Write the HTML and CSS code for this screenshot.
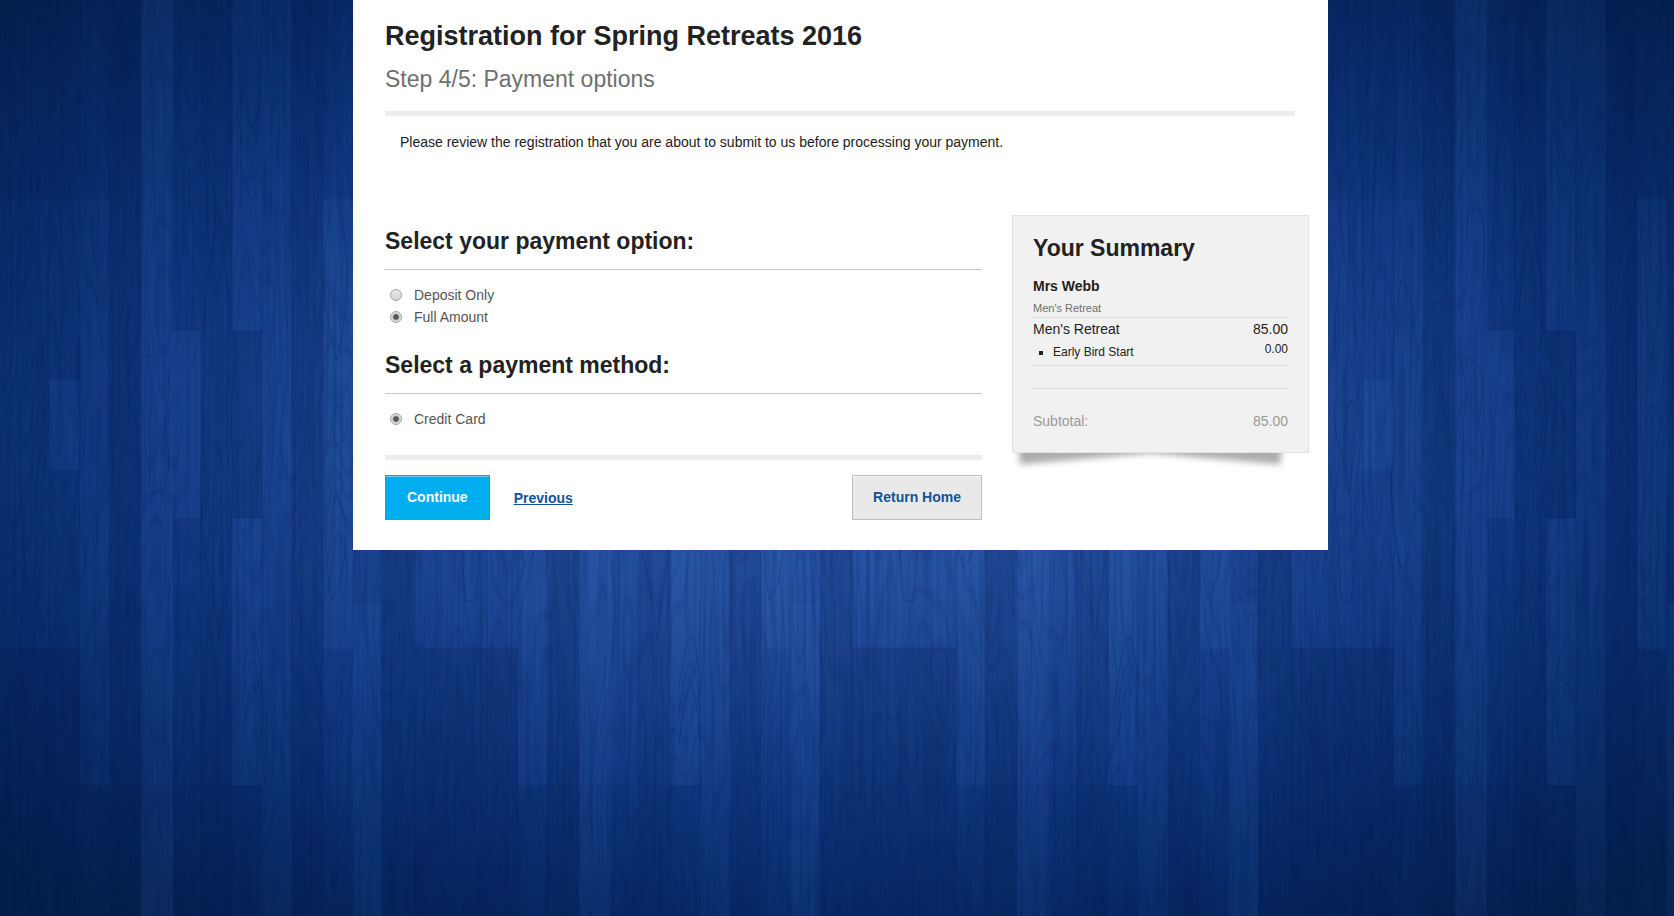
FILE: index.html
```html
<!doctype html>
<html lang="en">
    <head>
        <meta charset="UTF-8" />
        <meta name="viewport" content="width=device-width, initial-scale=1.0" />
        <title>Registration for Spring Retreats 2016</title>
        <link rel="stylesheet" href="styles.css">
    </head>
    <body>
        <!-- Wooden floor backdrop: planks repeat every 438px, grain is drawn over them -->
        <svg class="backdrop" aria-hidden="true">
            <defs>
                <filter id="grain" x="0" y="0" width="100%" height="100%" color-interpolation-filters="sRGB">
                    <feTurbulence type="fractalNoise" baseFrequency="0.3 0.006" numOctaves="3" seed="4" />
                    <feColorMatrix values="0 0 0 0 0  0 0 0 0 0.06  0 0 0 0 0.25  2.4 0 0 0 -0.9" />
                </filter>
                <filter id="rings" x="0" y="0" width="100%" height="100%" color-interpolation-filters="sRGB">
                    <feTurbulence type="fractalNoise" baseFrequency="0.026 0.004" numOctaves="2" seed="11" />
                    <feColorMatrix values="0 0 0 0 0  0 0 0 0 0.08  0 0 0 0 0.3  1 0 0 0 0" />
                    <feComponentTransfer>
                        <feFuncA type="table" tableValues="0 0 0 0 0 0 0 0 0 0 0 0 0 1 0 0 0 1 0 0 0 1 0 0 0 1 0 0 0 1 0 0 0 1 0 0 0 0 0 0 0" />
                    </feComponentTransfer>
                </filter>
                <pattern id="planks" x="141" y="0" width="438" height="1000" patternUnits="userSpaceOnUse">
                    <g fill="#5a8ae0">
                        <rect x="0" y="0" width="32" height="1000" opacity=".09" />
                        <rect x="32" y="330" width="28" height="188" opacity=".08" />
                        <rect x="91" y="0" width="30" height="330" opacity=".06" />
                        <rect x="91" y="518" width="30" height="267" opacity=".08" />
                        <rect x="121" y="0" width="30" height="1000" opacity=".04" />
                        <rect x="182" y="199" width="30" height="450" opacity=".08" />
                        <rect x="212" y="603" width="29" height="397" opacity=".07" />
                        <rect x="346" y="380" width="31" height="90" opacity=".07" />
                        <rect x="377" y="199" width="30" height="586" opacity=".04" />
                    </g>
                    <g fill="#001440">
                        <rect x="60" y="0" width="31" height="1000" opacity=".09" />
                        <rect x="91" y="330" width="30" height="188" opacity=".1" />
                        <rect x="151" y="0" width="31" height="1000" opacity=".12" />
                        <rect x="241" y="0" width="33" height="1000" opacity=".15" />
                        <rect x="274" y="648" width="103" height="352" opacity=".17" />
                        <rect x="274" y="0" width="103" height="199" opacity=".09" />
                        <rect x="377" y="785" width="61" height="215" opacity=".08" />
                        <rect x="406" y="0" width="32" height="1000" opacity=".14" />
                        <rect x="0" y="785" width="121" height="215" opacity=".06" />
                    </g>
                    <path d="M0 0V1000M60 0V1000M91 0V1000M121 0V1000M151 0V1000M182 0V1000M241 0V1000M274 0V1000M346 0V1000M377 0V1000M406 0V1000M274 648H377M91 518H121M32 330H60" fill="none" stroke="#001a50" opacity=".22" />
                    <!-- Knots and flame shaped grain -->
                    <g fill="none" stroke="#001c58" opacity=".3">
                        <path d="M75 62Q64 80 64 150L68 260Q64 300 64 330M75 62Q85 70 87 150L84 260Q90 300 89 330" />
                        <path d="M77 200Q73 230 68 280Q62 310 62 335Q70 350 76 344Q80 340 84 348Q90 330 87 300L82 250Z" />
                        <path d="M64 375Q76 355 88 378Q94 420 86 470Q76 490 65 470Q58 420 64 375Z" />
                        <path d="M68 404Q76 388 86 408Q90 425 85 442Q76 458 67 440Q60 422 68 404Z" />
                        <path d="M62 500Q76 520 88 500Q94 530 87 570Q82 600 78 640Q74 600 67 570Q58 530 62 500Z" />
                        <path d="M96 60Q102 120 112 128Q120 115 120 60M98 90Q104 145 112 150Q118 140 121 100M98 120Q105 175 112 180Q119 165 121 140M98 155Q106 195 112 200Q118 190 121 170" />
                        <path d="M98 700Q106 640 112 636Q118 644 121 690M98 725Q106 665 112 660Q118 670 121 715M100 745Q106 690 112 684Q118 694 121 740" />
                        <path d="M94 352Q106 365 116 380L118 335M94 395Q112 405 108 424Q102 446 94 456M118 460Q108 490 94 505" />
                        <path d="M0 354Q30 358 28 390L24 424Q32 470 22 490L0 498M6 362Q14 390 8 424Q10 460 8 486" />
                        <path d="M328 242Q318 290 318 350L308 390L300 424L310 460L318 500L324 600M334 242Q340 300 338 360L346 424L338 490Q340 560 334 602L324 600" />
                        <path d="M332 350Q328 390 316 405L320 440Q330 460 332 495Q336 450 344 430Q342 400 332 350M334 400L344 420L334 444L328 432L330 408Z" />
                        <path d="M384 280Q374 330 376 400Q380 430 374 480Q376 540 384 568Q396 560 394 520L404 500M384 280Q396 290 396 330L404 360" />
                        <path d="M190 210Q180 260 184 300Q190 340 196 360Q206 320 206 270Q202 210 196 200M196 405Q186 424 196 446Q208 440 206 420Q204 406 196 405M190 490Q180 540 190 600Q206 580 204 520Q198 490 190 490" />
                    </g>
                </pattern>
            </defs>
            <rect width="100%" height="100%" fill="url(#planks)" />
            <rect width="100%" height="100%" filter="url(#rings)" opacity=".1" />
            <rect width="100%" height="100%" filter="url(#grain)" opacity=".15" />
        </svg>

        <div class="page">
            <header class="page-header">
                <h1>Registration for Spring Retreats 2016</h1>
                <p class="step">Step 4/5: Payment options</p>
            </header>
            <p class="intro">
                Please review the registration that you are about to submit to us before processing your payment.
            </p>

            <div class="columns">
                <form class="payment">
                    <h2 id="option-title">Select your payment option:</h2>
                    <div class="choices" role="radiogroup" aria-labelledby="option-title">
                        <div class="choice">
                            <input type="radio" name="option" id="deposit" />
                            <label for="deposit">Deposit Only</label>
                        </div>
                        <div class="choice">
                            <input type="radio" name="option" id="full" checked />
                            <label for="full">Full Amount</label>
                        </div>
                    </div>

                    <h2 id="method-title">Select a payment method:</h2>
                    <div class="choices" role="radiogroup" aria-labelledby="method-title">
                        <div class="choice">
                            <input type="radio" name="method" id="card" checked />
                            <label for="card">Credit Card</label>
                        </div>
                    </div>

                    <div class="actions">
                        <button type="submit" class="button primary">Continue</button>
                        <a class="previous" href="#">Previous</a>
                        <a class="button home" href="#">Return Home</a>
                    </div>
                </form>

                <aside class="summary">
                    <div class="summary-box">
                        <h2>Your Summary</h2>
                        <h3>Mrs Webb</h3>
                        <p class="event">Men's Retreat</p>
                        <table>
                            <tbody class="items">
                                <tr>
                                    <td>Men's Retreat</td>
                                    <td class="price">85.00</td>
                                </tr>
                                <tr class="extra">
                                    <td><ul><li>Early Bird Start</li></ul></td>
                                    <td class="price">0.00</td>
                                </tr>
                            </tbody>
                            <tbody class="subtotal">
                                <tr class="spacer"><td colspan="2"></td></tr>
                                <tr>
                                    <td>Subtotal:</td>
                                    <td class="price">85.00</td>
                                </tr>
                            </tbody>
                        </table>
                    </div>
                </aside>
            </div>
        </div>
    </body>
</html>
```
FILE: styles.css
```css
:root {
    --text: #222;
    --muted: #6f6f6f;
    --link: #0f5499;
    --rule: #ededed;
}

* {
    box-sizing: border-box;
}

body {
    margin: 0;
    padding-left: 7px;
    min-height: 100vh;
    font-family: Arial, "Liberation Sans", sans-serif;
    font-size: 14px;
    line-height: 20px;
    color: var(--text);
    background: radial-gradient(
            ellipse 1160px 620px at 50% 47%,
            #2b5aac 0%,
            #2652a3 25%,
            #1a4490 45%,
            #103780 62%,
            #082b69 80%,
            #04224f 100%
        )
        fixed;
}

h1,
h2,
h3,
p {
    margin: 0;
}

.backdrop {
    position: fixed;
    inset: 0;
    z-index: -1;
    width: 100%;
    height: 100%;
}

.page {
    max-width: 975px;
    margin: 0 auto;
    padding: 20px 19px 30px 32px;
    background: #fff;
}

/* Header */
.page-header {
    margin-right: 14px;
    padding-bottom: 18px;
    border-bottom: 5px solid var(--rule);
}
h1 {
    font-size: 27px;
    line-height: 32px;
}
.step {
    margin-top: 13px;
    font-size: 23px;
    line-height: 28px;
    color: var(--muted);
}
.intro {
    margin: 16px 15px 63px;
}

.columns {
    display: flex;
    align-items: flex-start;
    gap: 30px;
}

/* Payment form */
.payment {
    flex: 1;
    padding-top: 12px;
}
h2 {
    font-size: 23px;
    line-height: 28px;
}
.payment h2 {
    padding-bottom: 14px;
    border-bottom: 1px solid #c8c8c8;
}
.choices {
    padding: 14px 0 23px 5px;
}
.choice {
    display: flex;
    align-items: center;
    height: 22px;
    color: #555;
}
.choice input {
    appearance: none;
    width: 12px;
    height: 12px;
    margin: 0 12px 0 0;
    border: 1px solid #a2a2a2;
    border-radius: 50%;
    background: linear-gradient(#e8e8e8, #d8d8d8);
}
.choice input:checked {
    background: radial-gradient(circle, #555 0 2px, #e2e2e2 4px);
}
.actions {
    display: flex;
    align-items: center;
    margin-top: 2px;
    padding-top: 15px;
    border-top: 5px solid var(--rule);
}
.button {
    padding: 11px 20px;
    border: 1px solid #bfbfbf;
    background: #e9e9e9;
    box-shadow: inset 0 1px #f4f4f4;
    font: bold 14px/21px Arial, "Liberation Sans", sans-serif;
    color: var(--link);
    text-decoration: none;
    cursor: pointer;
}
.button.primary {
    padding: 11px 21px;
    border-color: #7d7d7d;
    background: #00adef;
    box-shadow: inset 0 1px #6bcdf3;
    color: #fff;
}
.previous {
    margin-left: 24px;
    font-weight: bold;
    color: var(--link);
}
.home {
    margin-left: auto;
}

/* Order summary */
.summary {
    position: relative;
    z-index: 0;
    flex: 0 0 297px;
}
.summary-box {
    padding: 18px 20px 21px;
    border: 1px solid #e2e2e2;
    background: #f1f1f1;
}
/* Lifted corner shadows */
.summary::before,
.summary::after {
    content: "";
    position: absolute;
    z-index: -1;
    bottom: 14px;
    left: 5px;
    width: 44%;
    height: 20px;
    box-shadow: 0 20px 6px rgba(0, 0, 0, 0.32);
    transform: rotate(-5deg);
}
.summary::after {
    left: auto;
    right: 26px;
    transform: rotate(5deg);
}
h3 {
    margin-top: 14px;
    font-size: 14px;
    line-height: 20px;
}
.event {
    margin-top: 4px;
    padding-bottom: 1px;
    border-bottom: 1px solid #dedede;
    font-size: 11px;
    line-height: 16px;
    color: var(--muted);
}
table {
    width: 100%;
    border-collapse: collapse;
}
td {
    padding: 0;
    vertical-align: top;
}
.items td {
    padding-top: 1px;
}
.items .extra td {
    height: 26px;
    font-size: 12px;
    line-height: 18px;
    border-bottom: 1px solid #dedede;
}
.price {
    text-align: right;
}
ul {
    margin: 3px 0 0;
    padding-left: 20px;
    list-style: square;
}
.spacer td {
    height: 23px;
    border-bottom: 1px solid #d8d8d8;
}
.subtotal {
    color: #999;
}
.subtotal tr:last-child td {
    padding-top: 22px;
}
```
